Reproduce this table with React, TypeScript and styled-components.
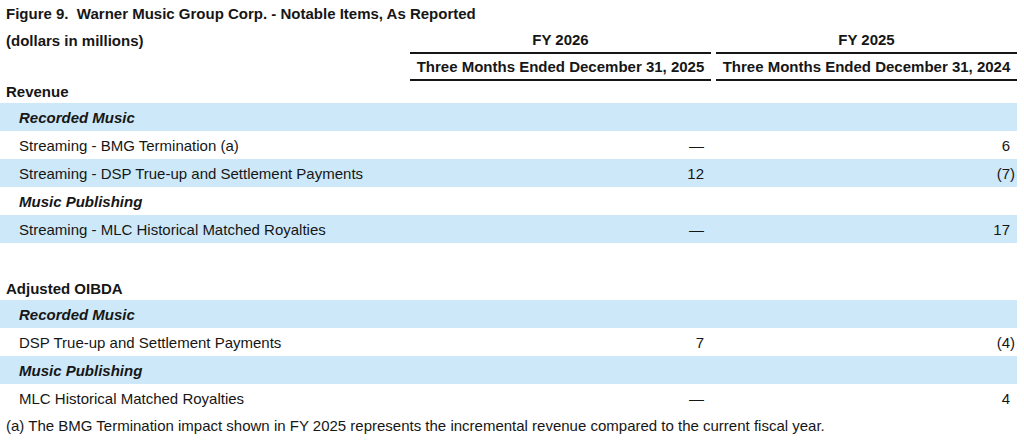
import * as React from 'react';
import styled, { createGlobalStyle } from 'styled-components';

const ink = '#161616';
const shade = '#cde9f9';

const GlobalStyle = createGlobalStyle`
  html, body {
    margin: 0;
    padding: 0;
    background: #ffffff;
  }
  body {
    font-family: "Liberation Sans", Arial, sans-serif;
    font-size: 15px;
    color: ${ink};
  }
`;

const Page = styled.div`
  width: 1024px;
  height: 442px;
  overflow: hidden;
`;

const Title = styled.div`
  height: 28px;
  line-height: 28px;
  padding-left: 6px;
  font-weight: bold;
  white-space: pre;
`;

// label column, then the two period columns (410-711 and 716-1017)
const Grid = styled.div`
  display: grid;
  grid-template-columns: 405px 301px 301px;
  column-gap: 5px;
  width: 1017px;
`;

const HeaderGrid = styled(Grid)`
  grid-template-rows: 26px 27px;
  font-weight: bold;
`;

const Units = styled.div`
  padding-left: 6px;
  line-height: 26px;
`;

const PeriodCell = styled.div<{ $row: number }>`
  text-align: center;
  border-bottom: 2px solid ${ink};
  line-height: ${p => (p.$row === 1 ? '24px' : '25px')};
  white-space: nowrap;
`;

const SectionTitle = styled.div`
  height: 22px;
  line-height: 22px;
  padding-left: 6px;
  font-weight: bold;
`;

const Row = styled(Grid)<{ $shaded?: boolean }>`
  height: 28px;
  align-items: center;
  background: ${p => (p.$shaded ? shade : 'transparent')};
`;

const Label = styled.div<{ $sub?: boolean }>`
  padding-left: 19px;
  font-weight: ${p => (p.$sub ? 'bold' : 'normal')};
  font-style: ${p => (p.$sub ? 'italic' : 'normal')};
  white-space: nowrap;
`;

const Value = styled.div<{ $pad: number }>`
  text-align: right;
  padding-right: ${p => p.$pad}px;
  white-space: nowrap;
`;

const Hang = styled.span`
  visibility: hidden;
`;

const Spacer = styled.div`
  height: 35px;
`;

const Footnote = styled.div`
  height: 28px;
  line-height: 28px;
  padding-left: 6px;
  white-space: nowrap;
`;

type Line = { label: string; sub?: boolean; shaded?: boolean; a?: string; b?: string };

const revenue: Line[] = [
  { label: 'Recorded Music', sub: true, shaded: true },
  { label: 'Streaming - BMG Termination (a)', a: '—', b: '6' },
  { label: 'Streaming - DSP True-up and Settlement Payments', shaded: true, a: '12', b: '(7)' },
  { label: 'Music Publishing', sub: true },
  { label: 'Streaming - MLC Historical Matched Royalties', shaded: true, a: '—', b: '17' },
];

const oibda: Line[] = [
  { label: 'Recorded Music', sub: true, shaded: true },
  { label: 'DSP True-up and Settlement Payments', a: '7', b: '(4)' },
  { label: 'Music Publishing', sub: true, shaded: true },
  { label: 'MLC Historical Matched Royalties', a: '—', b: '4' },
];

function Amount({ v }: { v?: string }) {
  if (!v) return null;
  if (v.startsWith('(')) return <>{v}</>;
  return (
    <>
      {v}
      <Hang>)</Hang>
    </>
  );
}

function Lines({ items }: { items: Line[] }) {
  return (
    <>
      {items.map((l, i) => (
        <Row key={i} $shaded={l.shaded}>
          <Label $sub={l.sub}>{l.label}</Label>
          <Value $pad={7}>{l.a}</Value>
          <Value $pad={2}>
            <Amount v={l.b} />
          </Value>
        </Row>
      ))}
    </>
  );
}

export default function App() {
  return (
    <Page>
      <GlobalStyle />
      <Title>{'Figure 9.  Warner Music Group Corp. - Notable Items, As Reported'}</Title>
      <HeaderGrid>
        <Units>(dollars in millions)</Units>
        <PeriodCell $row={1}>FY 2026</PeriodCell>
        <PeriodCell $row={1}>FY 2025</PeriodCell>
        <div />
        <PeriodCell $row={2}>Three Months Ended December 31, 2025</PeriodCell>
        <PeriodCell $row={2}>Three Months Ended December 31, 2024</PeriodCell>
      </HeaderGrid>
      <SectionTitle>Revenue</SectionTitle>
      <Lines items={revenue} />
      <Spacer />
      <SectionTitle>Adjusted OIBDA</SectionTitle>
      <Lines items={oibda} />
      <Footnote>
        (a) The BMG Termination impact shown in FY 2025 represents the incremental revenue compared to the current fiscal year.
      </Footnote>
    </Page>
  );
}
